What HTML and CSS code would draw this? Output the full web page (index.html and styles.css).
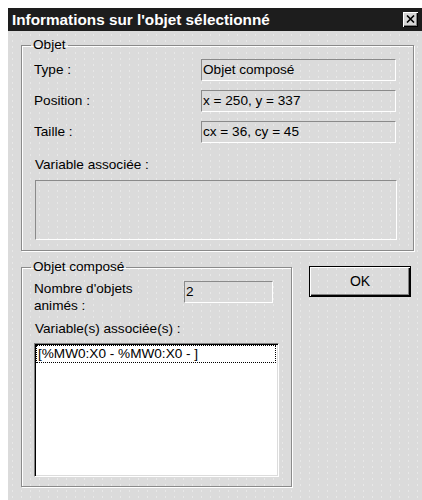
FILE: index.html
```html
<!DOCTYPE html>
<html lang="fr">
<head>
<meta charset="utf-8">
<title>Informations sur l'objet sélectionné</title>
<link rel="stylesheet" href="styles.css">
</head>
<body>
<div class="dialog">
  <div class="titlebar">
    <span class="title">Informations sur l'objet sélectionné</span>
    <button class="close" type="button" aria-label="Fermer">
      <svg width="9" height="8" viewBox="0 0 9 8"><path d="M1 0.5 L8 7.5 M8 0.5 L1 7.5" stroke="#000" stroke-width="1.6" fill="none"/></svg>
    </button>
  </div>
  <div class="content">
    <fieldset class="group group-object">
      <legend>Objet</legend>
      <div class="rows">
        <span class="label">Type :</span>
        <div class="field">Objet composé</div>
        <span class="label">Position :</span>
        <div class="field">x = 250, y = 337</div>
        <span class="label">Taille :</span>
        <div class="field">cx = 36, cy = 45</div>
      </div>
      <div class="label var-label">Variable associée :</div>
      <div class="field field-large"></div>
    </fieldset>
    <div class="lower">
      <fieldset class="group group-composite">
        <legend>Objet composé</legend>
        <div class="count-row">
          <span class="label count-label">Nombre d'objets<br>animés :</span>
          <div class="field field-count">2</div>
        </div>
        <div class="label vars-label">Variable(s) associée(s) :</div>
        <div class="listbox">
          <div class="list-item">[%MW0:X0 - %MW0:X0 - ]</div>
        </div>
      </fieldset>
      <button class="btn-ok" type="button">OK</button>
    </div>
  </div>
</div>
</body>
</html>
```
FILE: styles.css
```css
html, body {
  height: 100%;
}

body {
  margin: 8px 0 0 8px;
  background: #fff;
  overflow: hidden;
  font-family: "Liberation Sans", Arial, sans-serif;
  font-size: 13.6px;
  color: #000;
}

.dialog {
  height: 492px;
  background-color: #dbdbdb;
  background-image: radial-gradient(circle, rgba(255, 255, 255, 0.35) 0.6px, transparent 1px);
  background-size: 9px 6px;
  display: flex;
  flex-direction: column;
}

/* window caption */
.titlebar {
  height: 23px;
  flex: none;
  background: #1d1d1d;
  display: flex;
  align-items: center;
  justify-content: space-between;
  padding: 0 4px 0 4px;
}

.title {
  color: #fff;
  font-weight: bold;
  font-size: 15.3px;
  line-height: 16px;
  white-space: nowrap;
}

.close {
  width: 15px;
  height: 15px;
  padding: 0;
  border: none;
  background: #d6d6d6;
  box-shadow: inset 1px 1px 0 #fff, inset -1px -1px 0 #000, inset -2px -2px 0 #808080;
  display: flex;
  align-items: center;
  justify-content: center;
}

.close svg {
  display: block;
  margin: -1px 0 0 -1px;
}

.content {
  padding: 6px 8px 0 13px;
}

/* etched group boxes */
.group {
  margin: 0;
  min-inline-size: 0;
  border: 1px solid #8a8a8a;
  box-shadow: inset 1px 1px 0 #fff, 1px 1px 0 #fff;
  padding: 0 0 10px 12px;
}

.group legend {
  padding: 0 2px;
  margin-left: -3px;
  line-height: 16px;
}

.label {
  line-height: 16px;
  white-space: nowrap;
}

.rows {
  margin-top: 6px;
  display: grid;
  grid-template-columns: 167px 195px;
  grid-auto-rows: 22px;
  row-gap: 9px;
  align-items: center;
}

.field {
  box-sizing: border-box;
  height: 22px;
  border: 1px solid;
  border-color: #8a8a8a #fff #fff #8a8a8a;
  padding: 0 1px;
  line-height: 20px;
  white-space: nowrap;
}

.var-label {
  margin: 14px 0 0 1px;
}

.field-large {
  width: 362px;
  height: 60px;
  margin: 7px 0 0 1px;
}

.lower {
  display: flex;
  align-items: flex-start;
  margin-top: 8px;
}

.group-composite {
  width: 271px;
  box-sizing: border-box;
  padding-bottom: 9px;
}

.count-row {
  display: flex;
  align-items: flex-start;
  margin-top: 5px;
}

.count-label {
  width: 150px;
  line-height: 17px;
}

.field-count {
  width: 89px;
  margin-top: 1px;
}

.vars-label {
  margin: 7px 0 0 1px;
}

.listbox {
  box-sizing: border-box;
  width: 245px;
  height: 134px;
  margin-top: 6px;
  background: #fff;
  border: 1px solid;
  border-color: #808080 #fff #fff #808080;
  box-shadow: inset 1px 1px 0 #000, inset -1px -1px 0 #dcdcdc;
  padding: 1px 2px 2px 1px;
}

.list-item {
  height: 18px;
  line-height: 16px;
  padding: 0 1px;
  box-sizing: border-box;
  border: 1px dotted #000;
  white-space: nowrap;
}

/* default push button */
.btn-ok {
  margin: 7px 0 0 17px;
  width: 102px;
  height: 31px;
  padding: 0 0 2px;
  font: inherit;
  font-size: 14px;
  color: #000;
  background: transparent;
  border: 1px solid #000;
  box-shadow: inset 1px 1px 0 #fff, inset -1px -1px 0 #000, inset -2px -2px 0 #808080;
}
```
